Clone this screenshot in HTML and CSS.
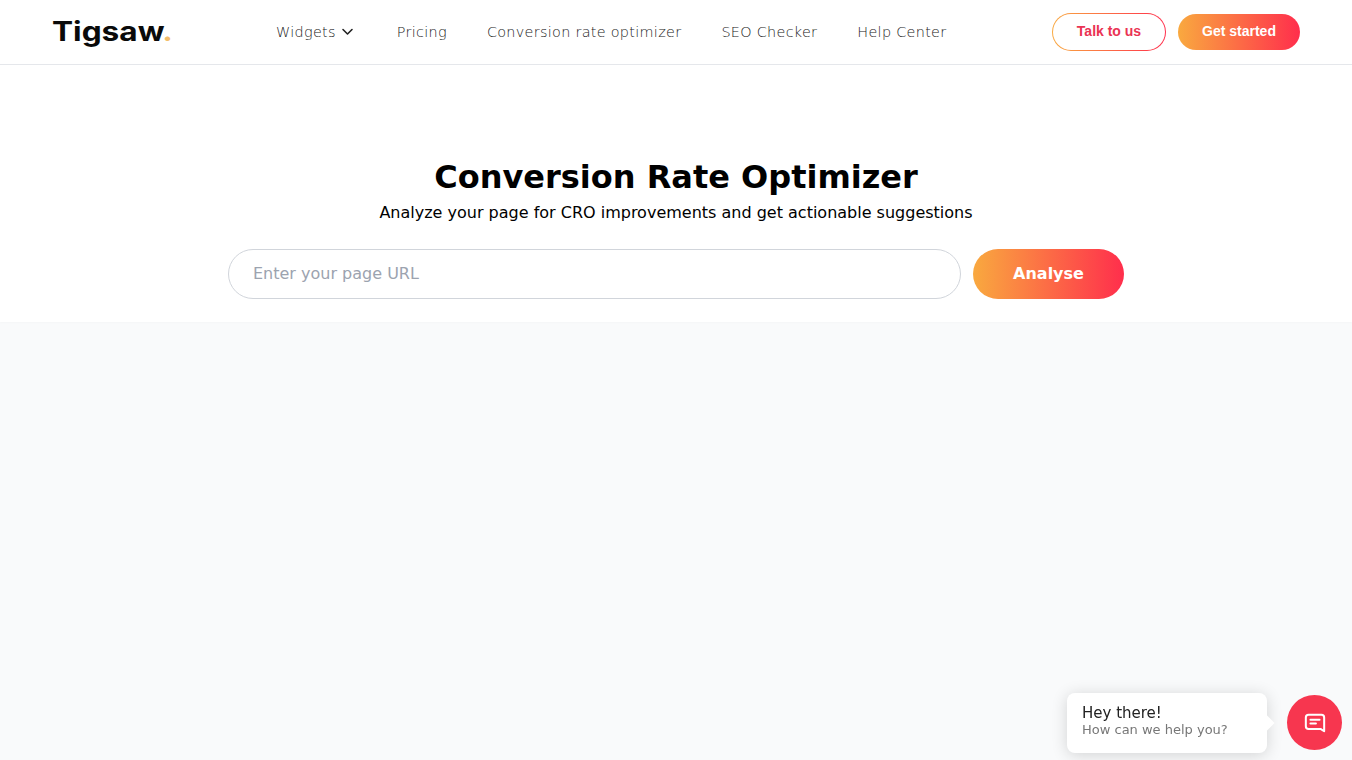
FILE: index.html
```html
<!DOCTYPE html>
<html>
<head>
  <title>Conversion Rate Optimizer</title>
  <link rel="stylesheet" href="styles.css">
</head>
<body>

  <header class="topbar">
    <a class="logo" href="#"><span class="logo-text">Tigsaw<span class="logo-dot">.</span></span></a>
    <nav class="navbar">
      <a href="#" class="nav-drop">Widgets
        <svg width="16" height="16" viewBox="0 0 16 16" fill="none" stroke="#222" stroke-width="1.6" stroke-linecap="round" stroke-linejoin="round"><path d="M2 5.500l4.500 4.500 4.500-4.500"/></svg>
      </a>
      <a href="#">Pricing</a>
      <a href="#">Conversion rate optimizer</a>
      <a href="#">SEO Checker</a>
      <a href="#">Help Center</a>
    </nav>
    <div class="top-actions">
      <a href="#" class="btn-outline"><span class="btn-outline-text">Talk to us</span></a>
      <a href="#" class="btn-fill">Get started</a>
    </div>
  </header>

  <section class="hero">
    <h1>Conversion Rate Optimizer</h1>
    <p>Analyze your page for CRO improvements and get actionable suggestions</p>
    <form class="url-form">
      <input class="url-input" type="text" placeholder="Enter your page URL">
      <button class="analyse-btn" type="button">Analyse</button>
    </form>
  </section>

  <main class="results"></main>

  <div class="chat-widget">
    <div class="chat-bubble">
      <div class="chat-title">Hey there!</div>
      <div class="chat-sub">How can we help you?</div>
    </div>
    <button class="chat-btn" type="button">
      <svg width="22" height="22" viewBox="0 0 24 24" fill="none" stroke="#fff" stroke-width="2.200" stroke-linecap="round" stroke-linejoin="round"><path d="M5 3h14a3 3 0 0 1 3 3v15l-4-2.500h-13a3 3 0 0 1-3-3v-9.500a3 3 0 0 1 3-3z"/><path d="M7 8.500h10"/><path d="M7 12.500h6"/></svg>
    </button>
  </div>

</body>
</html>
```

FILE: styles.css
```css
* {
  box-sizing: border-box;
}

html, body {
  height: 100%;
}

body {
  margin: 0;
  background: #f9fafb;
  color: #000;
  font-family: 'DejaVu Sans', sans-serif;
  overflow: hidden;
}

a {
  text-decoration: none;
}

.topbar {
  display: flex;
  align-items: center;
  height: 65px;
  padding: 0 52px;
  background: #fff;
  border-bottom: 1px solid #e5e7eb;
}

.logo {
  display: block;
  width: 224px;
  flex-shrink: 0;
}

.logo-text {
  display: inline-block;
  font-family: Inter, sans-serif;
  font-size: 27px;
  font-weight: 700;
  line-height: 30px;
  color: #0a0a0a;
  transform: scaleX(1.17);
  transform-origin: left center;
}

.logo-dot {
  color: #f2bd6b;
}

.navbar {
  display: flex;
  align-items: center;
  gap: 40px;
  flex: 1;
}

.navbar a {
  color: #222;
  font-size: 14.400px;
  font-weight: 300;
  letter-spacing: 0.3px;
}

.nav-drop {
  display: flex;
  align-items: center;
  gap: 5px;
}

.top-actions {
  display: flex;
  align-items: center;
  gap: 12px;
}

.btn-outline {
  display: flex;
  align-items: center;
  justify-content: center;
  width: 114px;
  height: 38px;
  padding-bottom: 2px;
  border: 1px solid transparent;
  border-radius: 19px;
  background: linear-gradient(#fff, #fff) padding-box, linear-gradient(90deg, #f9a93f, #ff2e4c) border-box;
}

.btn-outline-text {
  font-family: 'Liberation Sans', sans-serif;
  font-size: 14px;
  font-weight: 700;
  color: #ea3353;
}

.btn-fill {
  display: flex;
  align-items: center;
  justify-content: center;
  width: 122px;
  height: 36px;
  padding-bottom: 2px;
  border-radius: 18px;
  background: linear-gradient(90deg, #f9a93f, #ff2e4c);
  color: #fff;
  font-family: 'Liberation Sans', sans-serif;
  font-size: 14px;
  font-weight: 700;
}

.hero {
  display: flex;
  flex-direction: column;
  align-items: center;
  height: 257px;
  padding-top: 92px;
  background: #fff;
  box-shadow: 0 1px 2px rgba(0, 0, 0, 0.02);
}

.hero h1 {
  margin: 0;
  font-size: 32px;
  font-weight: 700;
  line-height: 40px;
}

.hero p {
  margin: 4px 0 0;
  font-size: 16px;
  line-height: 24px;
}

.url-form {
  display: flex;
  gap: 12px;
  width: 896px;
  margin-top: 24px;
}

.url-input {
  flex: 1;
  height: 50px;
  padding: 0 24px 2px;
  border: 1px solid #d1d5db;
  border-radius: 25px;
  background: #fff;
  font-family: 'DejaVu Sans', sans-serif;
  font-size: 16px;
  outline: none;
}

.url-input::placeholder {
  color: #9ca3af;
}

.analyse-btn {
  width: 151px;
  height: 50px;
  padding: 0 0 2px;
  border: none;
  border-radius: 25px;
  background: linear-gradient(90deg, #f9a93f, #ff2e4c);
  color: #fff;
  font-family: 'DejaVu Sans', sans-serif;
  font-size: 16px;
  font-weight: 700;
  cursor: pointer;
}

.chat-widget {
  position: fixed;
  right: 10px;
  bottom: 7px;
  display: flex;
  align-items: flex-start;
  gap: 20px;
}

.chat-bubble {
  position: relative;
  width: 200px;
  height: 60px;
  padding: 10px 15px;
  background: #fff;
  border-radius: 8px;
  box-shadow: 0 2px 16px rgba(0, 0, 0, 0.16);
}

.chat-bubble::after {
  content: "";
  position: absolute;
  top: 24px;
  right: -5px;
  width: 12px;
  height: 12px;
  background: #fff;
  transform: rotate(45deg);
}

.chat-title {
  padding-top: 1px;
  font-size: 15px;
  line-height: 18px;
  color: #222;
}

.chat-sub {
  margin-top: -1px;
  font-size: 13px;
  line-height: 18px;
  color: #777;
}

.chat-btn {
  display: flex;
  align-items: center;
  justify-content: center;
  width: 55px;
  height: 55px;
  margin-top: 2px;
  padding: 0;
  border: none;
  border-radius: 50%;
  background: #f7364f;
  cursor: pointer;
}
```
